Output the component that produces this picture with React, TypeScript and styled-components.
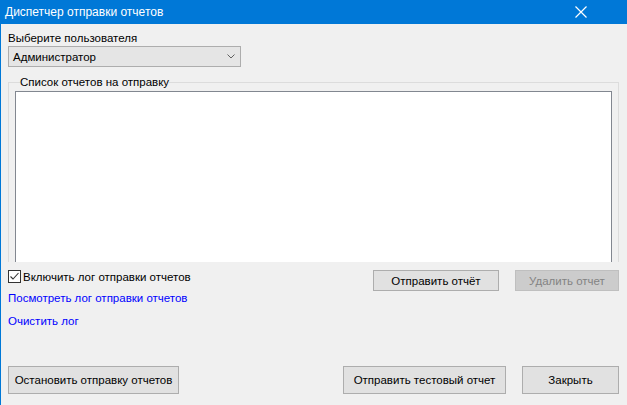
import { createGlobalStyle } from 'styled-components';
import styled from 'styled-components';

const GlobalStyle = createGlobalStyle`
  html, body {
    margin: 0;
    padding: 0;
    background: #f0f0f0;
  }
  body {
    font-family: 'Liberation Sans', Arial, sans-serif;
    font-size: 11.5px;
    color: #000;
  }
`;

const Window = styled.div`
  width: 627px;
  height: 405px;
  display: flex;
  flex-direction: column;
  background: #f0f0f0;
  border-left: 1px solid #0078d7;
  box-sizing: border-box;
  overflow: hidden;
`;

const TitleBar = styled.div`
  height: 24px;
  flex: none;
  display: flex;
  align-items: center;
  justify-content: space-between;
  background: #0078d7;
  color: #fff;
  padding: 0 40px 0 5px;
  font-family: 'Liberation Sans', Arial, sans-serif;
  font-size: 12px;
  margin-left: -1px;
`;

const Body = styled.div`
  flex: 1;
  display: flex;
  flex-direction: column;
  padding: 8px 8px 0 7px;
`;

const Label = styled.div`
  line-height: 13px;
  height: 13px;
  margin-bottom: 1px;
`;

const Combo = styled.div`
  width: 233px;
  height: 21px;
  box-sizing: border-box;
  border: 1px solid #adadad;
  background: #e5e5e5;
  display: flex;
  align-items: center;
  justify-content: space-between;
  padding: 0 5px 0 4px;
`;

const GroupBox = styled.fieldset`
  margin: 9px 0 0 0;
  padding: 2px 6px 0 6px;
  border: 1px solid #dcdcdc;
  border-bottom: none;
  min-width: 0;
`;

const Legend = styled.legend`
  padding: 0;
  margin-left: 5px;
  line-height: 13px;
`;

const ListBox = styled.div`
  height: 171px;
  background: #fff;
  border: 1px solid #828790;
  border-bottom: none;
  box-sizing: border-box;
`;

const OptionsRow = styled.div`
  display: flex;
  align-items: flex-start;
  margin-top: 8px;
`;

const CheckLabel = styled.label`
  display: flex;
  align-items: center;
  gap: 2px;
  height: 13px;
  flex: 1;
`;

const CheckBox = styled.span`
  width: 13px;
  height: 13px;
  box-sizing: border-box;
  border: 1px solid #333;
  background: #fff;
  display: flex;
  align-items: center;
  justify-content: center;
`;

const Button = styled.button<{ $w: number; $h: number; $disabled?: boolean }>`
  width: ${(p) => p.$w}px;
  height: ${(p) => p.$h}px;
  box-sizing: border-box;
  border: 1px solid ${(p) => (p.$disabled ? '#bfbfbf' : '#adadad')};
  background: ${(p) => (p.$disabled ? '#cccccc' : '#e1e1e1')};
  color: ${(p) => (p.$disabled ? '#838383' : '#000')};
  font-family: 'Liberation Sans', Arial, sans-serif;
  font-size: 11.5px;
  padding: 0;
  margin: 0;
`;

const RowButtons = styled.div`
  display: flex;
  gap: 16px;
`;

const Link = styled.div<{ $gap: number }>`
  color: #0000ff;
  line-height: 13px;
  height: 13px;
  margin-top: ${(p) => p.$gap}px;
`;

const Footer = styled.div`
  margin-top: auto;
  margin-bottom: 11px;
  display: flex;
  align-items: center;
`;

const FooterRight = styled.div`
  margin-left: auto;
  display: flex;
  gap: 16px;
`;

export default function App() {
  return (
    <>
      <GlobalStyle />
      <Window>
        <TitleBar>
          <span>Диспетчер отправки отчетов</span>
          <svg width="12" height="12" viewBox="0 0 12 12">
            <path d="M0.5 0.5 L11.5 11.5 M11.5 0.5 L0.5 11.5" stroke="#fff" strokeWidth="1.2" fill="none" />
          </svg>
        </TitleBar>
        <Body>
          <Label>Выберите пользователя</Label>
          <Combo>
            <span>Администратор</span>
            <svg width="8" height="5" viewBox="0 0 8 5">
              <path d="M0.5 0.5 L4 4 L7.5 0.5" stroke="#606060" fill="none" />
            </svg>
          </Combo>
          <GroupBox>
            <Legend>Список отчетов на отправку</Legend>
            <ListBox />
          </GroupBox>
          <OptionsRow>
            <CheckLabel>
              <CheckBox>
                <svg width="11" height="11" viewBox="0 0 11 11">
                  <path d="M1.5 5.5 L4 8 L9.5 2" stroke="#333" strokeWidth="1.1" fill="none" />
                </svg>
              </CheckBox>
              Включить лог отправки отчетов
            </CheckLabel>
            <RowButtons>
              <Button $w={126} $h={21}>Отправить отчёт</Button>
              <Button $w={104} $h={21} $disabled>Удалить отчет</Button>
            </RowButtons>
          </OptionsRow>
          <Link $gap={1}>Посмотреть лог отправки отчетов</Link>
          <Link $gap={10}>Очистить лог</Link>
          <Footer>
            <Button $w={171} $h={28}>Остановить отправку отчетов</Button>
            <FooterRight>
              <Button $w={163} $h={28}>Отправить тестовый отчет</Button>
              <Button $w={97} $h={28}>Закрыть</Button>
            </FooterRight>
          </Footer>
        </Body>
      </Window>
    </>
  );
}
